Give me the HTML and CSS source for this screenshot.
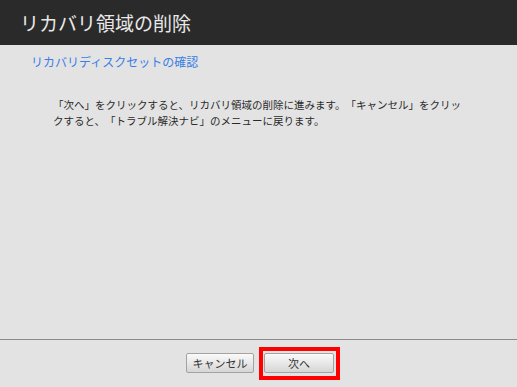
FILE: index.html
```html
<!DOCTYPE html>
<html lang="ja">

<head>
    <meta charset="UTF-8">
    <meta name="viewport" content="width=device-width, initial-scale=1.0">
    <title>リカバリ領域の削除</title>
    <link rel="stylesheet" href="styles.css">
</head>

<body>
    <div class="window">
        <header class="title-bar">
            <h1>リカバリ領域の削除</h1>
        </header>

        <main class="content">
            <h2 class="step">リカバリディスクセットの確認</h2>
            <p class="message">「次へ」をクリックすると、リカバリ領域の削除に進みます。「キャンセル」をクリックすると、「トラブル解決ナビ」のメニューに戻ります。</p>
        </main>

        <footer class="actions">
            <button class="btn">キャンセル</button>
            <span class="highlight">
                <button class="btn btn-next">次へ</button>
            </span>
        </footer>
    </div>
</body>

</html>
```

FILE: styles.css
```css
body {
    margin: 0;
    font-family: "Noto Sans CJK JP", "Noto Sans", sans-serif;
    background: #e3e3e3;
    text-spacing-trim: space-all;
}

.window {
    width: 517px;
    height: 387px;
    display: flex;
    flex-direction: column;
}

/* 上部の黒いタイトル帯 */
.title-bar {
    height: 45px;
    background: #2a2a2a;
    display: flex;
    align-items: center;
    padding-left: 20px;
    box-sizing: border-box;
}

.title-bar h1 {
    margin: 0;
    font-size: 19px;
    font-weight: normal;
    color: #e8e8e8;
    line-height: 1;
}

.content {
    flex: 1;
    padding: 8px 0 0 31px;
}

.step {
    margin: 0;
    font-size: 12px;
    font-weight: normal;
    color: #3a7ee6;
    line-height: 18px;
}

.message {
    margin: 26px 0 0 22px;
    width: 414px;
    font-size: 10.5px;
    line-height: 16px;
    color: #2a2a2a;
}

/* 下部のボタン列 */
.actions {
    height: 48px;
    box-sizing: border-box;
    border-top: 1px solid #8a8a8a;
    display: flex;
    justify-content: center;
    align-items: flex-start;
    gap: 5px;
    padding: 7px 0 0 9px;
}

.btn {
    height: 20px;
    width: 68px;
    margin-top: 6px;
    padding: 0;
    border: 1px solid #a3a3a3;
    border-radius: 2px;
    background: linear-gradient(#fafafa, #d6d6d6);
    font-family: inherit;
    font-size: 11px;
    color: #333;
}

/* 次へボタンを囲む赤い枠 */
.highlight {
    display: flex;
    border: 4px solid #f00;
    padding: 2px 2px 3px 1px;
}

.btn-next {
    width: 70px;
    margin-top: 0;
}
```
